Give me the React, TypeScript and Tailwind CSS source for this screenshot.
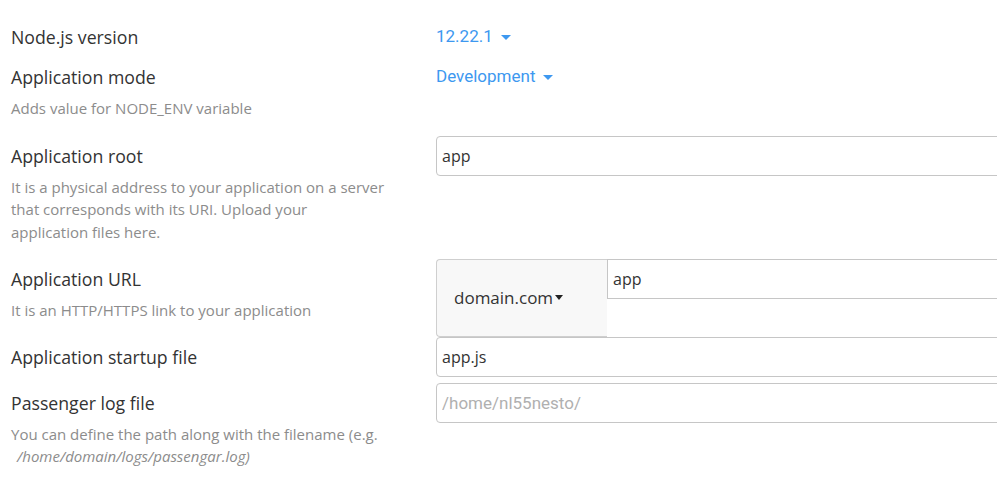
import React from "react";

function Caret({ dark }: { dark?: boolean }) {
  return (
    <span
      className={
        dark
          ? "inline-block h-0 w-0 border-x-[4.5px] border-t-[5px] border-x-transparent border-t-[#222]"
          : "inline-block h-0 w-0 border-x-[5px] border-t-[5px] border-x-transparent border-t-[#3d98f0]"
      }
    />
  );
}

function Label({ children }: { children: React.ReactNode }) {
  return <div className="h-10 text-[17.7px] leading-10 text-[#333]">{children}</div>;
}

function Desc({ children }: { children: React.ReactNode }) {
  return (
    <div className="w-[375px] pb-4 text-[15px] leading-[22.5px] text-[#8c8c8c]">
      {children}
    </div>
  );
}

function TextInput({ value, placeholder }: { value?: string; placeholder?: string }) {
  return (
    <input
      readOnly
      value={value}
      placeholder={placeholder}
      className="block h-10 w-[640px] rounded-[4px] border border-[#c6c6c6] bg-white px-[5px] text-[16px] text-[#333] outline-none placeholder:text-[#b0b0b0] placeholder:[font-family:'Roboto',sans-serif] placeholder:text-[17px]"
    />
  );
}

export default function App() {
  return (
    <div className="min-h-screen w-full overflow-hidden bg-white pl-[11px] pt-[17px] [font-family:'Open_Sans',sans-serif]">
      {/* Node.js version */}
      <div className="flex">
        <div className="w-[425px] shrink-0">
          <Label>Node.js version</Label>
        </div>
        <div className="flex h-10 items-center gap-[8px] text-[17px] text-[#3d98f0] [font-family:'Roboto',sans-serif]">
          <span>12.22.1</span>
          <Caret />
        </div>
      </div>

      {/* Application mode */}
      <div className="flex">
        <div className="w-[425px] shrink-0">
          <Label>Application mode</Label>
          <Desc>Adds value for NODE_ENV variable</Desc>
        </div>
        <div className="flex h-10 items-center gap-[8px] text-[17px] text-[#3d98f0] [font-family:'Roboto',sans-serif]">
          <span>Development</span>
          <Caret />
        </div>
      </div>

      {/* Application root */}
      <div className="flex">
        <div className="w-[425px] shrink-0">
          <Label>Application root</Label>
          <Desc>
            It is a physical address to your application on a server that corresponds with its
            URI. Upload your application files here.
          </Desc>
        </div>
        <div>
          <TextInput value="app" />
        </div>
      </div>

      {/* Application URL */}
      <div className="flex h-[77.5px]">
        <div className="w-[425px] shrink-0">
          <Label>Application URL</Label>
          <Desc>It is an HTTP/HTTPS link to your application</Desc>
        </div>
        <div className="flex h-[77.5px] w-[640px]">
          <div className="flex w-[171px] shrink-0 items-center gap-[2px] rounded-l-[4px] border border-r-0 border-[#cfcfcf] bg-[#f8f8f8] pl-[17px] text-[17px] text-[#333]">
            <span>domain.com</span>
            <Caret dark />
          </div>
          <div className="flex-1">
            <input
              readOnly
              value="app"
              className="block h-10 w-full border border-r-0 border-[#c6c6c6] bg-white px-[5px] text-[16px] text-[#333] outline-none"
            />
          </div>
        </div>
      </div>

      {/* Application startup file */}
      <div className="mb-[6px] flex">
        <div className="w-[425px] shrink-0">
          <Label>Application startup file</Label>
        </div>
        <div>
          <TextInput value="app.js" />
        </div>
      </div>

      {/* Passenger log file */}
      <div className="flex">
        <div className="w-[425px] shrink-0">
          <Label>Passenger log file</Label>
          <Desc>
            You can define the path along with the filename (e.g.{" "}
            <span className="inline-block pl-[6px] italic">/home/domain/logs/passengar.log)</span>
          </Desc>
        </div>
        <div>
          <TextInput placeholder="/home/nl55nesto/" />
        </div>
      </div>
    </div>
  );
}
